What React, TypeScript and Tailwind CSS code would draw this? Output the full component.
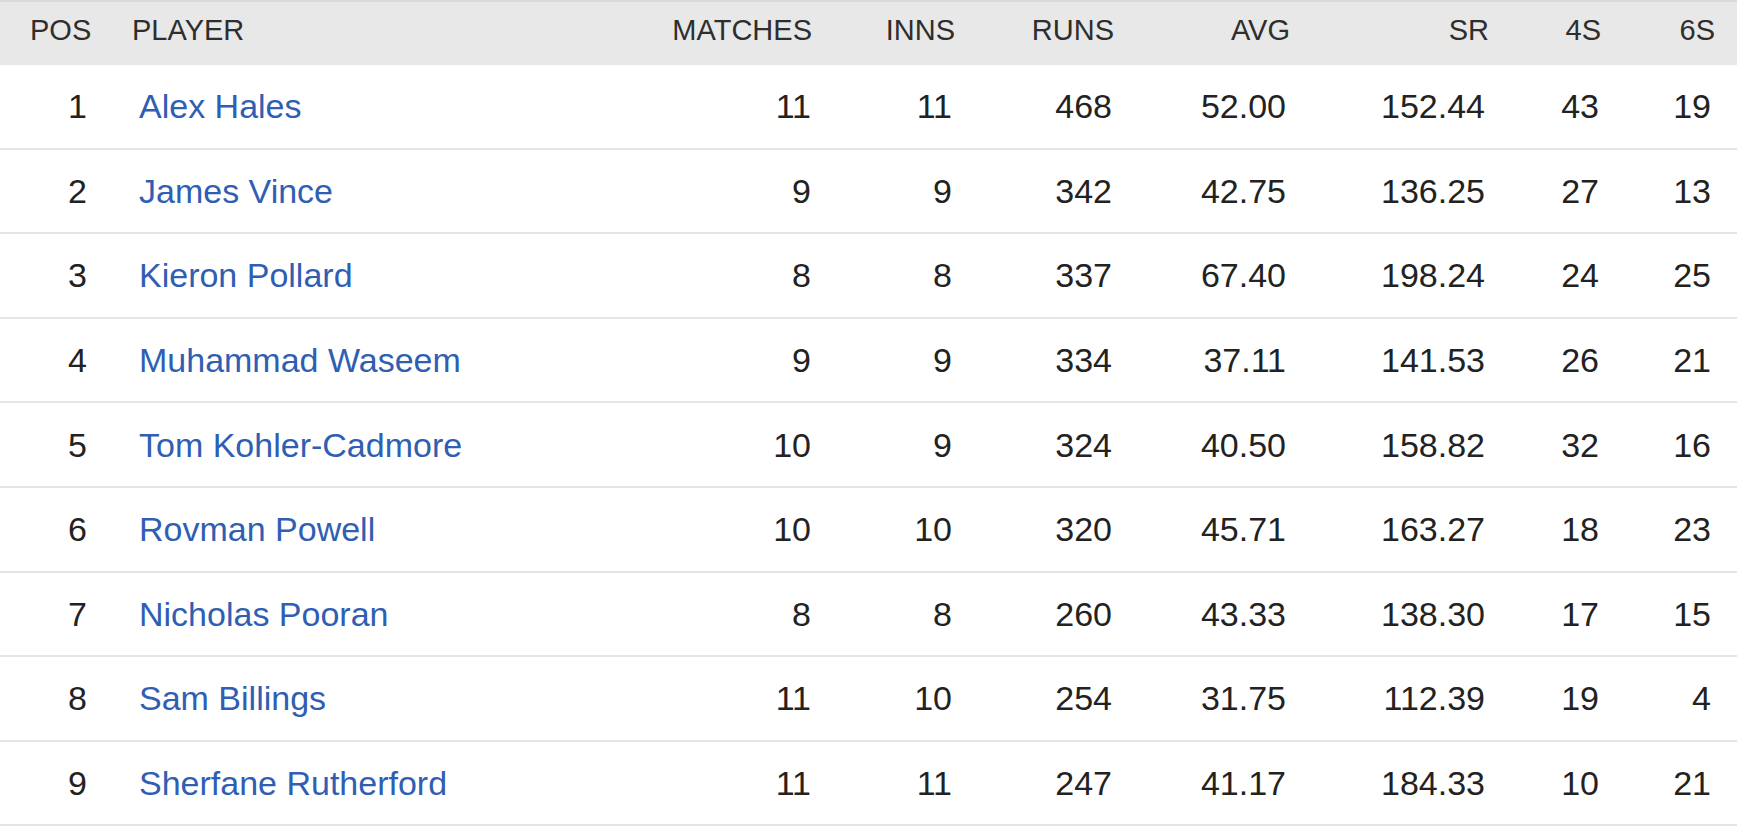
import React from "react";

type Row = {
  pos: number;
  name: string;
  m: string;
  i: string;
  r: string;
  avg: string;
  sr: string;
  f: string;
  s: string;
};

const rows: Row[] = [
  { pos: 1, name: "Alex Hales", m: "11", i: "11", r: "468", avg: "52.00", sr: "152.44", f: "43", s: "19" },
  { pos: 2, name: "James Vince", m: "9", i: "9", r: "342", avg: "42.75", sr: "136.25", f: "27", s: "13" },
  { pos: 3, name: "Kieron Pollard", m: "8", i: "8", r: "337", avg: "67.40", sr: "198.24", f: "24", s: "25" },
  { pos: 4, name: "Muhammad Waseem", m: "9", i: "9", r: "334", avg: "37.11", sr: "141.53", f: "26", s: "21" },
  { pos: 5, name: "Tom Kohler-Cadmore", m: "10", i: "9", r: "324", avg: "40.50", sr: "158.82", f: "32", s: "16" },
  { pos: 6, name: "Rovman Powell", m: "10", i: "10", r: "320", avg: "45.71", sr: "163.27", f: "18", s: "23" },
  { pos: 7, name: "Nicholas Pooran", m: "8", i: "8", r: "260", avg: "43.33", sr: "138.30", f: "17", s: "15" },
  { pos: 8, name: "Sam Billings", m: "11", i: "10", r: "254", avg: "31.75", sr: "112.39", f: "19", s: "4" },
  { pos: 9, name: "Sherfane Rutherford", m: "11", i: "11", r: "247", avg: "41.17", sr: "184.33", f: "10", s: "21" },
];

const gridCols =
  "grid grid-cols-[100px_540px_186px_141px_160px_174px_199px_114px_123px]";

export default function App() {
  return (
    <div
      className="w-[1757px] h-[829px] bg-white overflow-hidden"
      style={{ fontFamily: '"Liberation Sans", Arial, sans-serif' }}
    >
      <div className="w-[1737px]">
        {/* Header */}
        <div
          className={`${gridCols} h-[65px] bg-[#e8e8e8] border-t-2 border-[#dadada] text-[29px] leading-[29px] text-[#2e2e2e]`}
        >
          <div className="pt-[14px] pl-[30px] text-left">POS</div>
          <div className="pt-[14px] pl-[32px] text-left">PLAYER</div>
          <div className="pt-[14px] pr-[14px] text-right">MATCHES</div>
          <div className="pt-[14px] pr-[12px] text-right">INNS</div>
          <div className="pt-[14px] pr-[13px] text-right">RUNS</div>
          <div className="pt-[14px] pr-[11px] text-right">AVG</div>
          <div className="pt-[14px] pr-[11px] text-right">SR</div>
          <div className="pt-[14px] pr-[13px] text-right">4S</div>
          <div className="pt-[14px] pr-[22px] text-right">6S</div>
        </div>

        {/* Body */}
        {rows.map((row) => (
          <div
            key={row.pos}
            className={`${gridCols} h-[84.6px] border-b-2 border-[#e5e5e5] text-[34px] leading-[34px] text-[#222222] items-center`}
          >
            <div className="pr-[13px] text-right">{row.pos}</div>
            <div className="pl-[39px] text-left text-[#2f5eb2]">{row.name}</div>
            <div className="pr-[15px] text-right">{row.m}</div>
            <div className="pr-[15px] text-right">{row.i}</div>
            <div className="pr-[15px] text-right">{row.r}</div>
            <div className="pr-[15px] text-right">{row.avg}</div>
            <div className="pr-[15px] text-right">{row.sr}</div>
            <div className="pr-[15px] text-right">{row.f}</div>
            <div className="pr-[26px] text-right">{row.s}</div>
          </div>
        ))}
      </div>
    </div>
  );
}
